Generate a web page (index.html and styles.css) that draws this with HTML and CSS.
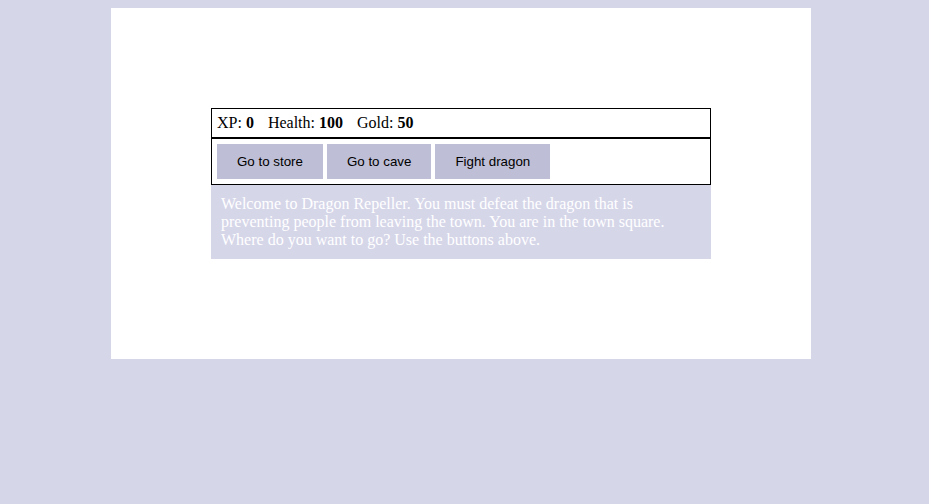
FILE: index.html
```html
<!DOCTYPE html>
<html lang="en">
<head>
<meta charset="utf-8">
<title>RPG - Dragon Repeller</title>
<link rel="stylesheet" href="styles.css">
</head>
<body>
<div class="page">
  <div class="game">
    <div class="stats">
      <span class="stat">XP: <strong>0</strong></span>
      <span class="stat">Health: <strong>100</strong></span>
      <span class="stat">Gold: <strong>50</strong></span>
    </div>
    <div class="controls">
      <button class="btn">Go to store</button>
      <button class="btn">Go to cave</button>
      <button class="btn">Fight dragon</button>
    </div>
    <div class="text">Welcome to Dragon Repeller. You must defeat the dragon that is preventing people from leaving the town. You are in the town square. Where do you want to go? Use the buttons above.</div>
  </div>
</div>
</body>
</html>
```

FILE: styles.css
```css
html, body {
  background: #d6d6e9;
}
body {
  margin: 8px;
  font-family: "Liberation Serif", "Times New Roman", serif;
  font-size: 16px;
}
.page {
  width: 500px;
  padding: 100px;
  margin-left: 103px;
  background: #ffffff;
}
.game {
  width: 500px;
}
.stats {
  border: 1px solid #000;
  padding: 5px;
  color: #000;
  line-height: 18px;
}
.stat {
  padding-right: 10px;
}
.controls {
  border: 1px solid #000;
  padding: 5px;
  display: flex;
  gap: 4px;
}
.btn {
  font-family: "Liberation Sans", Arial, sans-serif;
  font-size: 13.333px;
  line-height: 15px;
  padding: 10px 20px;
  border: none;
  background: #bebed6;
  color: #000;
  cursor: pointer;
}
.text {
  background: #d6d6e9;
  color: #ffffff;
  padding: 10px;
  line-height: 18px;
}
```
